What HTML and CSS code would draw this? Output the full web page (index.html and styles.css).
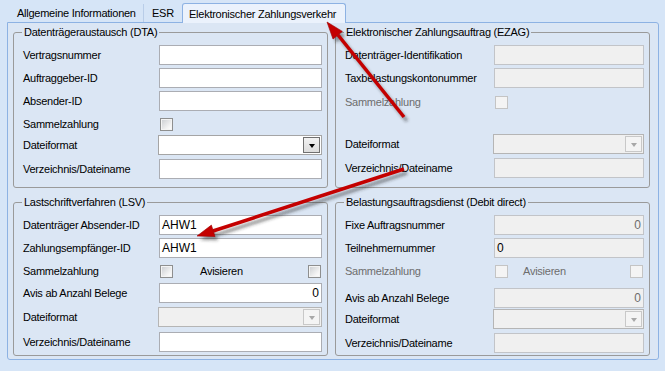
FILE: index.html
```html
<!DOCTYPE html>
<html lang="de">
<head>
    <meta charset="UTF-8">
    <title>Elektronischer Zahlungsverkehr</title>
    <link rel="stylesheet" href="styles.css">
</head>
<body>
    <div class="tabstrip">
        <div class="tab first">Allgemeine Informationen</div>
        <div class="tab esr">ESR</div>
        <div class="tab active">Elektronischer Zahlungsverkehr</div>
    </div>

    <div class="tabpage">
        <!-- Datenträgeraustausch -->
        <section class="group left dta">
            <div class="group-title">Datenträgeraustausch (DTA)</div>
            <div class="group-body">
                <div class="lbl">Vertragsnummer</div>
                <div class="field"></div>
                <div class="lbl">Auftraggeber-ID</div>
                <div class="field"></div>
                <div class="lbl">Absender-ID</div>
                <div class="field"></div>
                <div class="lbl">Sammelzahlung</div>
                <div class="checks"><span class="check"></span></div>
                <div class="lbl">Dateiformat</div>
                <div class="combo"><span class="drop"></span></div>
                <div class="lbl">Verzeichnis/Dateiname</div>
                <div class="field"></div>
            </div>
        </section>

        <!-- EZAG -->
        <section class="group right ezag">
            <div class="group-title">Elektronischer Zahlungsauftrag (EZAG)</div>
            <div class="group-body">
                <div class="lbl">Datenträger-Identifikation</div>
                <div class="field disabled"></div>
                <div class="lbl">Taxbelastungskontonummer</div>
                <div class="field disabled"></div>
                <div class="lbl off">Sammelzahlung</div>
                <div class="checks"><span class="check disabled"></span></div>
                <div class="lbl">Dateiformat</div>
                <div class="combo disabled"><span class="drop"></span></div>
                <div class="lbl">Verzeichnis/Dateiname</div>
                <div class="field disabled"></div>
            </div>
        </section>

        <!-- LSV -->
        <section class="group left lsv">
            <div class="group-title">Lastschriftverfahren (LSV)</div>
            <div class="group-body">
                <div class="lbl">Datenträger Absender-ID</div>
                <div class="field">AHW1</div>
                <div class="lbl">Zahlungsempfänger-ID</div>
                <div class="field">AHW1</div>
                <div class="lbl">Sammelzahlung</div>
                <div class="checks">
                    <span class="check"></span>
                    <span class="avis">Avisieren</span>
                    <span class="check end"></span>
                </div>
                <div class="lbl">Avis ab Anzahl Belege</div>
                <div class="field num">0</div>
                <div class="lbl">Dateiformat</div>
                <div class="combo disabled"><span class="drop"></span></div>
                <div class="lbl">Verzeichnis/Dateiname</div>
                <div class="field"></div>
            </div>
        </section>

        <!-- Debit direct -->
        <section class="group right debit">
            <div class="group-title">Belastungsauftragsdienst (Debit direct)</div>
            <div class="group-body">
                <div class="lbl">Fixe Auftragsnummer</div>
                <div class="field disabled num">0</div>
                <div class="lbl">Teilnehmernummer</div>
                <div class="field readonly">0</div>
                <div class="lbl off">Sammelzahlung</div>
                <div class="checks">
                    <span class="check disabled"></span>
                    <span class="avis off">Avisieren</span>
                    <span class="check disabled end"></span>
                </div>
                <div class="lbl">Avis ab Anzahl Belege</div>
                <div class="field disabled num">0</div>
                <div class="lbl">Dateiformat</div>
                <div class="combo disabled"><span class="drop"></span></div>
                <div class="lbl">Verzeichnis/Dateiname</div>
                <div class="field disabled"></div>
            </div>
        </section>
    </div>

    <!-- annotation arrows drawn over the form -->
    <svg class="arrows" width="665" height="371" viewBox="0 0 665 371">
        <defs>
            <filter id="blur" x="-20%" y="-20%" width="140%" height="140%">
                <feGaussianBlur stdDeviation="1.4"/>
            </filter>
        </defs>
        <g class="shadow" transform="translate(3 4)" filter="url(#blur)">
            <path d="M404 117 L338 35" />
            <polygon points="327,22 342.4,31.4 333,39" />
            <path d="M404 169 L213 231" />
            <polygon points="197,236 215,236.5 211.4,225.1" />
        </g>
        <g class="arrow">
            <path d="M404 117 L338 35" />
            <polygon points="327,22 342.4,31.4 333,39" />
            <path d="M404 169 L213 231" />
            <polygon points="197,236 215,236.5 211.4,225.1" />
        </g>
    </svg>
</body>
</html>
```

FILE: styles.css
```css
:root {
    --outer-bg: #d6e5f7;
    --page-bg: #dbe6f4;
    --tab-border: #8db2e3;
    --group-border: #9a9a9a;
    --field-border: #abadb3;
    --disabled-bg: #f0f0f0;
    --disabled-border: #c2c4c8;
    --off-text: #6d6d6d;
}

* {
    box-sizing: border-box;
}

body {
    margin: 0;
    width: 665px;
    height: 371px;
    overflow: hidden;
    position: relative;
    background-color: var(--outer-bg);
    font-family: "Liberation Sans", Arial, sans-serif;
    font-size: 11px;
    letter-spacing: -0.25px;
    color: #000;
}

/* tabs */
.tabstrip {
    display: flex;
    align-items: flex-end;
    height: 22px;
    padding-left: 8px;
    position: relative;
    z-index: 2;
}

.tab {
    height: 18px;
    line-height: 18px;
    white-space: nowrap;
}

.tab.first {
    width: 135px;
    padding-left: 9px;
}

.tab.esr {
    width: 39px;
    padding-left: 8px;
    border-left: 1px solid #b9cde8;
}

.tab.active {
    width: 164px;
    height: 20px;
    margin-bottom: -1px;
    padding: 2px 0 0 6px;
    line-height: 17px;
    border: 1px solid var(--tab-border);
    border-bottom: none;
    border-radius: 3px 3px 0 0;
    background-color: #ebf2fc;
}

/* tab page */
.tabpage {
    margin-left: 7px;
    width: 652px;
    height: 338px;
    border: 1px solid var(--tab-border);
    border-radius: 0 3px 3px 3px;
    background-color: var(--page-bg);
    padding: 9px 8px 3px 5px;
    display: grid;
    grid-template-columns: 315px 315px;
    grid-template-rows: 156px 154px;
    column-gap: 7px;
    row-gap: 14px;
}

/* group boxes */
.group {
    border: 1px solid var(--group-border);
    border-radius: 3px;
    padding: 0 5px 0 9px;
}

.group-title {
    display: table;
    margin: -7px 0 0 -1px;
    padding: 0 2px;
    line-height: 13px;
    background-color: var(--page-bg);
    white-space: nowrap;
}

.group-body {
    margin-top: 6px;
    display: grid;
    align-items: start;
}

.left .group-body {
    grid-template-columns: 136px 163px;
}

.right .group-body {
    grid-template-columns: 149px 150px;
}

.dta .group-body {
    grid-template-rows: 23px 23px 23px 21px 24px 20px;
}

.ezag .group-body {
    grid-template-rows: 23px 24px 42px 24px 20px;
}

.lsv .group-body {
    grid-template-rows: 23px 23px 22px 24px 25px 20px;
}

.debit .group-body {
    grid-template-rows: 23px 23px 27px 21px 24px 20px;
}

.lbl {
    height: 20px;
    display: flex;
    align-items: center;
    white-space: nowrap;
}

.off {
    color: var(--off-text);
}

/* text fields */
.field {
    height: 20px;
    border: 1px solid var(--field-border);
    background-color: #fff;
    padding: 0 2px;
    line-height: 18px;
    font-size: 12px;
    letter-spacing: 0;
}

.field.num {
    text-align: right;
}

.field.disabled,
.field.readonly {
    background-color: var(--disabled-bg);
    border-color: var(--disabled-border);
}

.field.disabled {
    color: var(--off-text);
}

/* combo boxes */
.combo {
    height: 20px;
    margin-left: -1px;
    border: 1px solid #a5a5a5;
    background-color: #fff;
    display: flex;
    justify-content: flex-end;
    padding: 1px;
}

.drop {
    width: 17px;
    border: 1px solid #707070;
    background: linear-gradient(#f2f2f2, #dcdcdc);
    display: flex;
    align-items: center;
    justify-content: center;
}

.drop::after {
    content: "";
    border-left: 3px solid transparent;
    border-right: 3px solid transparent;
    border-top: 4px solid #000;
    margin-top: 1px;
}

.combo.disabled {
    background-color: var(--disabled-bg);
    border-color: #b5b5b5;
}

.combo.disabled .drop {
    border-color: #c8c8c8;
    background: #f4f4f4;
}

.combo.disabled .drop::after {
    border-top-color: #a8a8a8;
}

/* check boxes */
.checks {
    height: 20px;
    display: flex;
    align-items: center;
}

.check {
    width: 13px;
    height: 13px;
    margin-left: 1px;
    border: 1px solid #8e8f8f;
    background: linear-gradient(135deg, #c9ccd0, #f4f4f4 70%, #fff);
    box-shadow: inset 0 0 0 1px #f4f4f4;
}

.check.disabled {
    border-color: #c4c4c4;
    background: #f4f4f4;
    box-shadow: none;
}

.check.end {
    margin-left: auto;
    margin-right: 1px;
}

.lsv .avis {
    margin-left: 27px;
}

.debit .avis {
    margin-left: 15px;
}

/* arrows */
.arrows {
    position: absolute;
    top: 0;
    left: 0;
    z-index: 5;
    pointer-events: none;
}

.arrows .shadow path {
    stroke: rgba(40, 40, 40, 0.45);
    stroke-width: 3.5;
    fill: none;
}

.arrows .shadow polygon {
    fill: rgba(40, 40, 40, 0.45);
}

.arrows .arrow path {
    stroke: #c40000;
    stroke-width: 3.5;
    fill: none;
}

.arrows .arrow polygon {
    fill: #c40000;
    stroke: #a00000;
    stroke-width: 0.6;
    stroke-linejoin: round;
}
```
